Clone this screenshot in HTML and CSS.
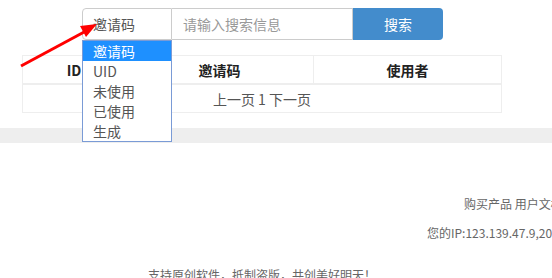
FILE: index.html
```html
<!DOCTYPE html>
<html lang="zh-CN">
<head>
    <meta charset="UTF-8">
    <meta name="viewport" content="width=device-width, initial-scale=1.0">
    <title>邀请码管理</title>
    <link rel="stylesheet" href="styles.css">
</head>
<body>

    <div class="page">
        <form class="search">
            <div class="select-wrap">
                <div class="select">邀请码</div>
                <ul class="options">
                    <li class="active">邀请码</li>
                    <li>UID</li>
                    <li>未使用</li>
                    <li>已使用</li>
                    <li>生成</li>
                </ul>
            </div>
            <input class="keyword" type="text" placeholder="请输入搜索信息">
            <button type="button" class="btn">搜索</button>
        </form>

        <table class="codes">
            <colgroup>
                <col class="c-id">
                <col class="c-code">
                <col class="c-user">
            </colgroup>
            <thead>
                <tr>
                    <th>ID</th>
                    <th>邀请码</th>
                    <th>使用者</th>
                </tr>
            </thead>
            <tbody>
                <tr>
                    <td colspan="3">上一页 1 下一页</td>
                </tr>
            </tbody>
        </table>

        <div class="band"></div>

        <footer class="footer">
            <p class="links">购买产品 用户文档 联系我们</p>
            <p class="ip">您的IP:123.139.47.9,2019-10-23 14:20:11</p>
            <p class="slogan">支持原创软件，抵制盗版，共创美好明天！</p>
        </footer>

        <!-- red annotation arrow -->
        <svg class="arrow" width="110" height="80" viewBox="0 0 110 80">
            <line x1="21" y1="66" x2="86" y2="31" stroke="#f00" stroke-width="3"/>
            <polygon points="97,24 80,26 86,37" fill="#f00"/>
        </svg>
    </div>

</body>
</html>
```

FILE: styles.css
```css
body {
    margin: 0;
    font-family: "Noto Sans CJK SC", "Liberation Sans", sans-serif;
    font-size: 14px;
    color: #555;
    background-color: #fff;
    overflow: hidden;
}
.page {
    position: relative;
    width: 552px;
    height: 278px;
    overflow: hidden;
}
.search {
    display: flex;
    padding: 8px 0 0 82px;
    height: 32px;
}
.select-wrap {
    position: relative;
}
.select {
    box-sizing: border-box;
    width: 90px;
    height: 32px;
    line-height: 30px;
    padding-left: 10px;
    border: 1px solid #ccc;
    border-radius: 4px 0 0 4px;
    color: #555;
}
.options {
    position: absolute;
    top: 32px;
    left: 0;
    box-sizing: border-box;
    width: 90px;
    margin: 0;
    padding: 0;
    list-style: none;
    background-color: #fff;
    border: 1px solid #7a9bd6;
    z-index: 2;
}
.options li {
    height: 20px;
    line-height: 20px;
    padding-left: 10px;
    color: #555;
}
.options li.active {
    background-color: #1e90ff;
    color: #fff;
}
.keyword {
    box-sizing: border-box;
    width: 181px;
    height: 32px;
    margin: 0;
    padding: 0 0 0 11px;
    border: 1px solid #ccc;
    border-left: none;
    font-family: inherit;
    font-size: 14px;
    color: #555;
    outline: none;
}
.keyword::placeholder {
    color: #999;
}
.btn {
    width: 90px;
    height: 32px;
    margin: 0;
    padding: 0;
    border: none;
    border-radius: 0 4px 4px 0;
    background-color: #438ccc;
    color: #fff;
    font-family: inherit;
    font-size: 14px;
}
.codes {
    margin: 15px 0 0 22px;
    width: 480px;
    border-collapse: collapse;
    table-layout: fixed;
}
.c-id {
    width: 103px;
}
.c-code,
.c-user {
    width: 188px;
}
.codes th,
.codes td {
    border: 1px solid #eee;
    padding: 0;
    height: 27px;
    text-align: center;
}
.codes th {
    border-bottom-width: 2px;
    color: #222;
    font-weight: bold;
}
.band {
    margin-top: 15px;
    height: 15px;
    background-color: #eee;
}
.footer p {
    margin: 0;
    font-size: 12px;
    line-height: 20px;
    color: #666;
    white-space: nowrap;
}
.links {
    padding: 51px 0 0 464px;
}
.ip {
    padding: 9px 0 0 427px;
}
.slogan {
    padding: 22px 0 0 148px;
}
.arrow {
    position: absolute;
    top: 0;
    left: 0;
    z-index: 3;
}
```
